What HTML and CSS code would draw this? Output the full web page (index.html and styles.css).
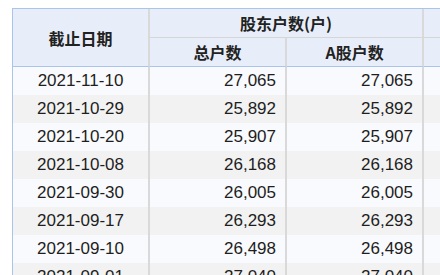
FILE: index.html
```html
<!DOCTYPE html>
<html lang="zh-CN">
<head>
  <meta charset="UTF-8" />
  <meta name="viewport" content="width=device-width, initial-scale=1.0"/>
  <title>股东户数</title>
  <link rel="stylesheet" href="styles.css">
</head>
<body>

<div class="wrap">
  <table class="holders">
    <colgroup>
      <col class="c-date">
      <col class="c-num">
      <col class="c-num">
      <col class="c-more">
    </colgroup>
    <thead>
      <tr>
        <th rowspan="2" class="date-head">截止日期</th>
        <th colspan="2">股东户数(户)</th>
        <th class="more"></th>
      </tr>
      <tr class="sub">
        <th>总户数</th>
        <th>A股户数</th>
        <th class="more"></th>
      </tr>
    </thead>
    <tbody>
      <tr><td class="date">2021-11-10</td><td>27,065</td><td>27,065</td><td></td></tr>
      <tr><td class="date">2021-10-29</td><td>25,892</td><td>25,892</td><td></td></tr>
      <tr><td class="date">2021-10-20</td><td>25,907</td><td>25,907</td><td></td></tr>
      <tr><td class="date">2021-10-08</td><td>26,168</td><td>26,168</td><td></td></tr>
      <tr><td class="date">2021-09-30</td><td>26,005</td><td>26,005</td><td></td></tr>
      <tr><td class="date">2021-09-17</td><td>26,293</td><td>26,293</td><td></td></tr>
      <tr><td class="date">2021-09-10</td><td>26,498</td><td>26,498</td><td></td></tr>
      <tr><td class="date">2021-09-01</td><td>27,040</td><td>27,040</td><td></td></tr>
    </tbody>
  </table>
</div>

</body>
</html>
```

FILE: styles.css
```css
* { box-sizing: border-box; margin: 0; padding: 0; }

body {
  font-family: 'Liberation Sans', 'Noto Sans CJK SC', sans-serif;
  background: #fff;
  color: #1e1e1e;
  overflow: hidden;
}

.wrap {
  padding: 8px 0 0 12px;
  width: 440px;
  height: 275px;
  overflow: hidden;
}

.holders {
  border-collapse: separate;
  border-spacing: 0;
  table-layout: fixed;
  width: 460px;
  border-top: 1px solid #aac4ec;
  border-left: 1px solid #aac4ec;
  font-size: 17px;
}

.c-date, .c-num { width: 137px; }
.c-more { width: 48px; }

.holders th,
.holders td {
  height: 28px;
  line-height: 28px;
  border-right: 2px solid #d9d9d9;
  white-space: nowrap;
  overflow: hidden;
}

.holders th {
  background: #e8eef9;
  font-weight: bold;
  font-family: 'Noto Sans CJK SC', 'Liberation Sans', sans-serif;
  font-size: 16px;
  color: #222;
  border-bottom: 1px solid #aac4ec;
}

.holders thead tr:first-child th {
  border-bottom: 1px solid #d6d6d6;
}

.holders thead tr:first-child th.date-head {
  border-bottom: 1px solid #aac4ec;
}

.holders td {
  text-align: right;
  padding: 0 9px;
  background: #f9fafd;
}

.holders td.date {
  text-align: center;
}

.holders tbody tr:nth-child(even) td {
  background: #f2f2f2;
}
```
